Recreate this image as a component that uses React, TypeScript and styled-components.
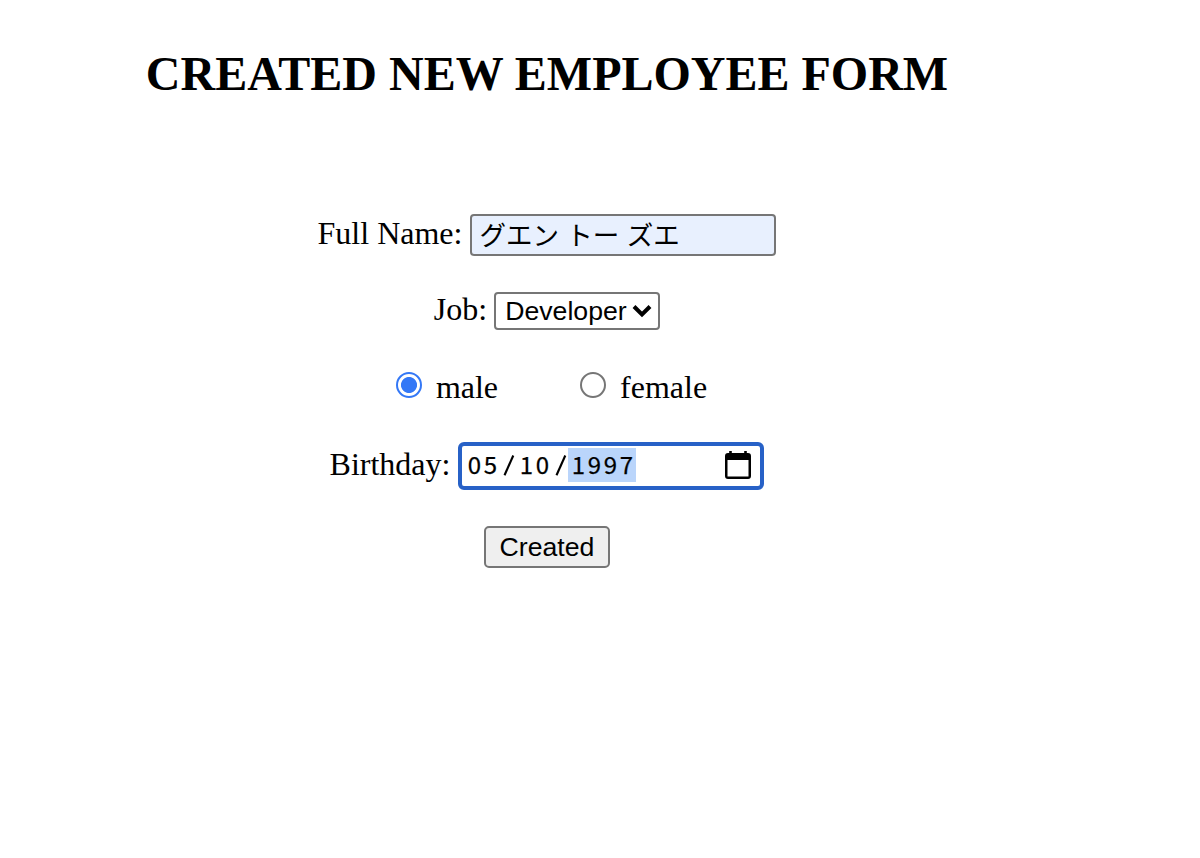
import React from 'react';
import styled, { createGlobalStyle } from 'styled-components';

const GlobalStyle = createGlobalStyle`
  * { box-sizing: border-box; }
  body { margin: 0; background: #fff; color: #000; font-family: 'Liberation Serif', serif; }
`;

const Page = styled.main`
  width: 1094px;
  height: 858px;
  padding-top: 47px;
  display: flex;
  flex-direction: column;
  align-items: center;
`;

const Title = styled.h1`
  margin: 0;
  font-size: 48px;
  line-height: 54px;
  font-weight: 700;
  white-space: nowrap;
`;

const Form = styled.form`
  margin: 113px 0 0;
  display: flex;
  flex-direction: column;
  align-items: center;
`;

const Row = styled.div<{ $gap: number; $inner?: number }>`
  display: flex;
  align-items: flex-start;
  gap: ${(p) => p.$inner ?? 8}px;
  margin-bottom: ${(p) => p.$gap}px;
`;

const Label = styled.label<{ $shift?: number }>`
  font-size: 32px;
  line-height: 36px;
  margin-top: ${(p) => p.$shift ?? 0}px;
  white-space: nowrap;
`;

const NameInput = styled.input`
  width: 306px;
  height: 42px;
  padding: 0 6px 4px 7px;
  border: 2px solid #767676;
  border-radius: 4px;
  background: #e8f0fe;
  color: #000;
  font: 26.5px 'Liberation Sans', 'Noto Sans CJK JP', sans-serif;
  outline: none;
`;

const SelectBox = styled.button`
  width: 166px;
  height: 38px;
  padding: 0 6px 0 9px;
  display: flex;
  align-items: center;
  justify-content: space-between;
  border: 2px solid #767676;
  border-radius: 4px;
  background: #fff;
  color: #000;
  font: 26.667px/34px 'Liberation Sans', sans-serif;
`;

const RadioRow = styled.div`
  display: flex;
  gap: 82px;
  padding-left: 9px;
  margin-bottom: 37px;
`;

const RadioOption = styled.label`
  display: flex;
  gap: 14px;
  font-size: 32px;
  line-height: 36px;
`;

const Radio = styled.input`
  appearance: none;
  width: 26px;
  height: 26px;
  margin: 3px 0 0;
  border: 2px solid #767676;
  border-radius: 50%;
  background: #fff;
  &:checked {
    border-color: #3478f6;
    background: radial-gradient(circle, #3478f6 7.6px, #fff 8.4px);
  }
`;

const DateField = styled.div`
  width: 306px;
  height: 48px;
  padding: 2px 9px 4px 4px;
  display: flex;
  align-items: center;
  border: 4px solid #2761c7;
  border-radius: 6px;
  font: 24px/32px 'Noto Sans CJK JP', sans-serif;
`;

const Part = styled.span<{ $width: number; $selected?: boolean }>`
  width: ${(p) => p.$width}px;
  height: 34px;
  display: flex;
  background: ${(p) => (p.$selected ? '#bad5fb' : 'transparent')};
  padding: ${(p) => (p.$selected ? '0 2px' : '0')};
  -webkit-text-stroke: 0.25px #000;
`;

const Digit = styled.span`
  width: 16px;
  text-align: center;
`;

const Slash = styled.svg`
  height: 34px;
  flex: none;
`;

const CalendarIcon = styled.svg`
  width: 26px;
  height: 30px;
  margin: 0 0 0 auto;
`;

const Submit = styled.button`
  width: 126px;
  height: 42px;
  padding: 0;
  border: 2px solid #767676;
  border-radius: 5px;
  background: #efefef;
  color: #000;
  font: 26.667px/38px 'Liberation Sans', sans-serif;
`;

const digits = (text: string) => text.split('').map((d, i) => <Digit key={i}>{d}</Digit>);

const Separator = ({ width }: { width: number }) => (
  <Slash width={width} viewBox={`0 0 ${width} 34`}>
    <path d="M4.500 27.300 13.300 7.500" stroke="#000" strokeWidth="2.100" />
  </Slash>
);

export default function App() {
  return (
    <>
      <GlobalStyle />
      <Page>
        <Title>CREATED NEW EMPLOYEE FORM</Title>
        <Form onSubmit={(e) => e.preventDefault()}>
          <Row $gap={36}>
            <Label htmlFor="name" $shift={1}>Full Name:</Label>
            <NameInput id="name" defaultValue="グエン トー ズエ" />
          </Row>
          <Row $gap={39} $inner={7}>
            <Label $shift={-1}>Job:</Label>
            <SelectBox type="button">
              Developer
              <svg width="20" height="14" viewBox="0 0 20 14">
                <path d="M2 2.500 10 10.500 18 2.500" fill="none" stroke="#000" strokeWidth="4" />
              </svg>
            </SelectBox>
          </Row>
          <RadioRow>
            <RadioOption>
              <Radio type="radio" name="gender" defaultChecked />
              male
            </RadioOption>
            <RadioOption>
              <Radio type="radio" name="gender" />
              female
            </RadioOption>
          </RadioRow>
          <Row $gap={36}>
            <Label $shift={4}>Birthday:</Label>
            <DateField>
              <Part $width={34}>{digits('05')}</Part>
              <Separator width={18} />
              <Part $width={34}>{digits('10')}</Part>
              <Separator width={16} />
              <Part $width={68} $selected>{digits('1997')}</Part>
              <CalendarIcon viewBox="0 0 26 30">
                <path d="M5.500 1v6M20.500 1v6" stroke="#000" strokeWidth="2.600" />
                <path d="M3 3h20a3 3 0 0 1 3 3V26a3 3 0 0 1-3 3H3a3 3 0 0 1-3-3V6a3 3 0 0 1 3-3ZM2.500 10v16.500h21V10Z" fillRule="evenodd" />
              </CalendarIcon>
            </DateField>
          </Row>
          <Submit type="submit">Created</Submit>
        </Form>
      </Page>
    </>
  );
}
